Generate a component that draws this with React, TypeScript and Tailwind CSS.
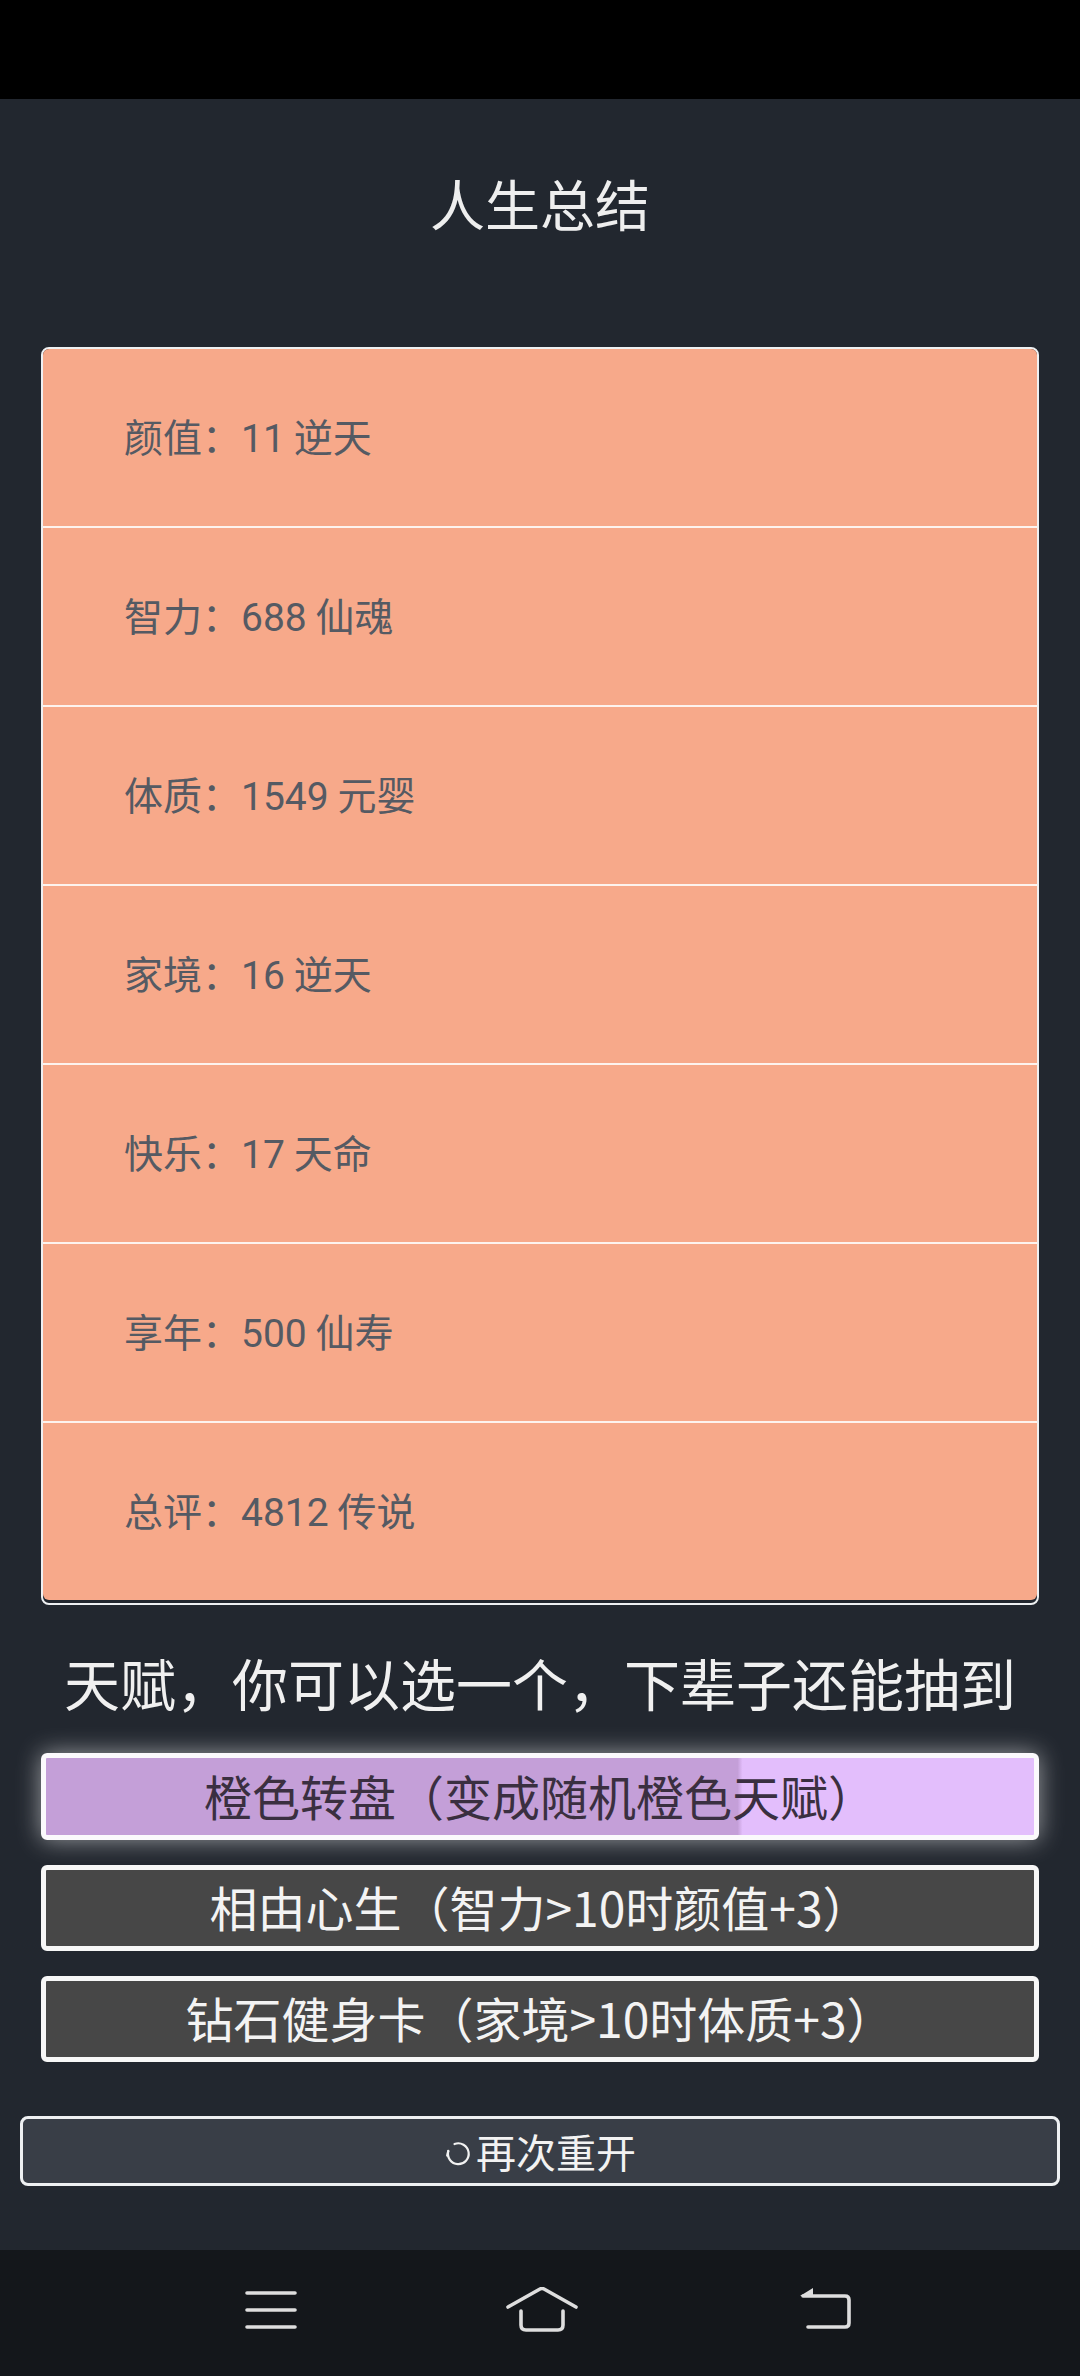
const stats = [
  { label: "颜值", value: 11, grade: "逆天" },
  { label: "智力", value: 688, grade: "仙魂" },
  { label: "体质", value: 1549, grade: "元婴" },
  { label: "家境", value: 16, grade: "逆天" },
  { label: "快乐", value: 17, grade: "天命" },
  { label: "享年", value: 500, grade: "仙寿" },
  { label: "总评", value: 4812, grade: "传说" },
];

const talents = [
  { name: "橙色转盘（变成随机橙色天赋）", selected: true },
  { name: "相由心生（智力>10时颜值+3）", selected: false },
  { name: "钻石健身卡（家境>10时体质+3）", selected: false },
];

function RestartIcon() {
  return (
    <svg width="28" height="30" viewBox="0 0 24 26" fill="none" className="mr-[4px] mt-[8px]">
      <path
        d="M9 3.5 A9 9 0 1 1 3.6 9.5"
        stroke="#f2f2f2"
        strokeWidth="1.9"
        strokeLinecap="round"
      />
      <path d="M3.6 9.5 L2.6 13.5" stroke="#f2f2f2" strokeWidth="1.9" strokeLinecap="round" />
    </svg>
  );
}

function NavBar() {
  return (
    <nav className="flex h-[126px] items-center bg-[#14171b] pb-[6px]">
      {/* menu */}
      <svg width="52" height="40" viewBox="0 0 52 40" fill="none" className="ml-[245px]">
        <path d="M2 3 H50 M2 20 H50 M2 37 H50" stroke="#dedede" strokeWidth="3.6" strokeLinecap="round" />
      </svg>
      {/* home */}
      <svg width="72" height="46" viewBox="0 0 72 46" fill="none" className="ml-[209px]">
        <path d="M2 20 L34 2 Q36 1 38 2 L70 20" stroke="#dedede" strokeWidth="3.6" strokeLinecap="round" strokeLinejoin="round" />
        <path d="M15 24 V38 Q15 43 20 43 H52 Q57 43 57 38 V24" stroke="#dedede" strokeWidth="3.6" strokeLinecap="round" />
      </svg>
      {/* back */}
      <svg width="54" height="46" viewBox="0 0 54 46" fill="none" className="ml-[221px]">
        <path d="M4 9 H46 Q50 9 50 13 V36 Q50 40 46 40 H9" stroke="#dedede" strokeWidth="3.6" strokeLinecap="round" strokeLinejoin="round" />
        <path d="M1 9 L14 1 L14 9 Z" fill="#dedede" />
      </svg>
    </nav>
  );
}

export default function App() {
  return (
    <div
      className="flex min-h-screen flex-col bg-[#22272f]"
      style={{ fontFamily: '"Noto Sans CJK SC", "Noto Sans", sans-serif' }}
    >
      {/* status bar */}
      <div className="h-[99px] bg-black" />

      <main className="flex flex-1 flex-col">
        <h1 className="mt-[76px] text-center text-[55px] leading-[55px] font-normal text-[#eeeeee]">
          人生总结
        </h1>

        {/* summary card */}
        <div className="mx-[41px] mt-[117px] rounded-lg border-2 border-[#eef0f2] pb-[3px]">
          <div className="overflow-hidden rounded-md">
            {stats.map((s, i) => (
              <div
                key={s.label}
                className={`flex items-center bg-[#f7a98a] pl-[81px] text-[39px] text-[#555a63] ${
                  i < stats.length - 1 ? "h-[179px] border-b-2 border-[#fdf3ee]" : "h-[177px]"
                }`}
              >
                <span>
                  {s.label}：<span style={{ fontFamily: "Roboto, sans-serif" }}>{s.value}</span> {s.grade}
                </span>
              </div>
            ))}
          </div>
        </div>

        <h2 className="mt-[49px] text-center text-[56px] leading-[56px] font-normal text-[#f0f0f0]">
          天赋，你可以选一个，下辈子还能抽到
        </h2>

        {/* talent choices */}
        <div className="mx-[41px] mt-[43px] flex flex-col gap-[25px]">
          {talents.map((t) =>
            t.selected ? (
              <button
                key={t.name}
                className="flex h-[87px] items-center justify-center rounded-md border-[5px] border-[#fbf9fc] bg-[linear-gradient(to_right,#c49fd8_70%,#e3befc_70.5%)] pb-[4px] text-[48px] leading-none text-[#3a2f40] shadow-[0_0_24px_rgba(255,255,255,0.55)]"
              >
                {t.name}
              </button>
            ) : (
              <button
                key={t.name}
                className="flex h-[86px] items-center justify-center rounded-md border-[5px] border-[#f7f7f7] bg-[#474747] pb-[4px] text-[48px] leading-none text-[#f3f3f3]"
              >
                {t.name}
              </button>
            ),
          )}
        </div>

        <button className="mx-[20px] mt-[54px] flex h-[70px] items-center justify-center rounded-lg border-[3px] border-[#eef0f2] bg-[#393e47] text-[40px] leading-none text-[#f2f2f2]">
          <RestartIcon />
          再次重开
        </button>
      </main>

      <NavBar />
    </div>
  );
}
